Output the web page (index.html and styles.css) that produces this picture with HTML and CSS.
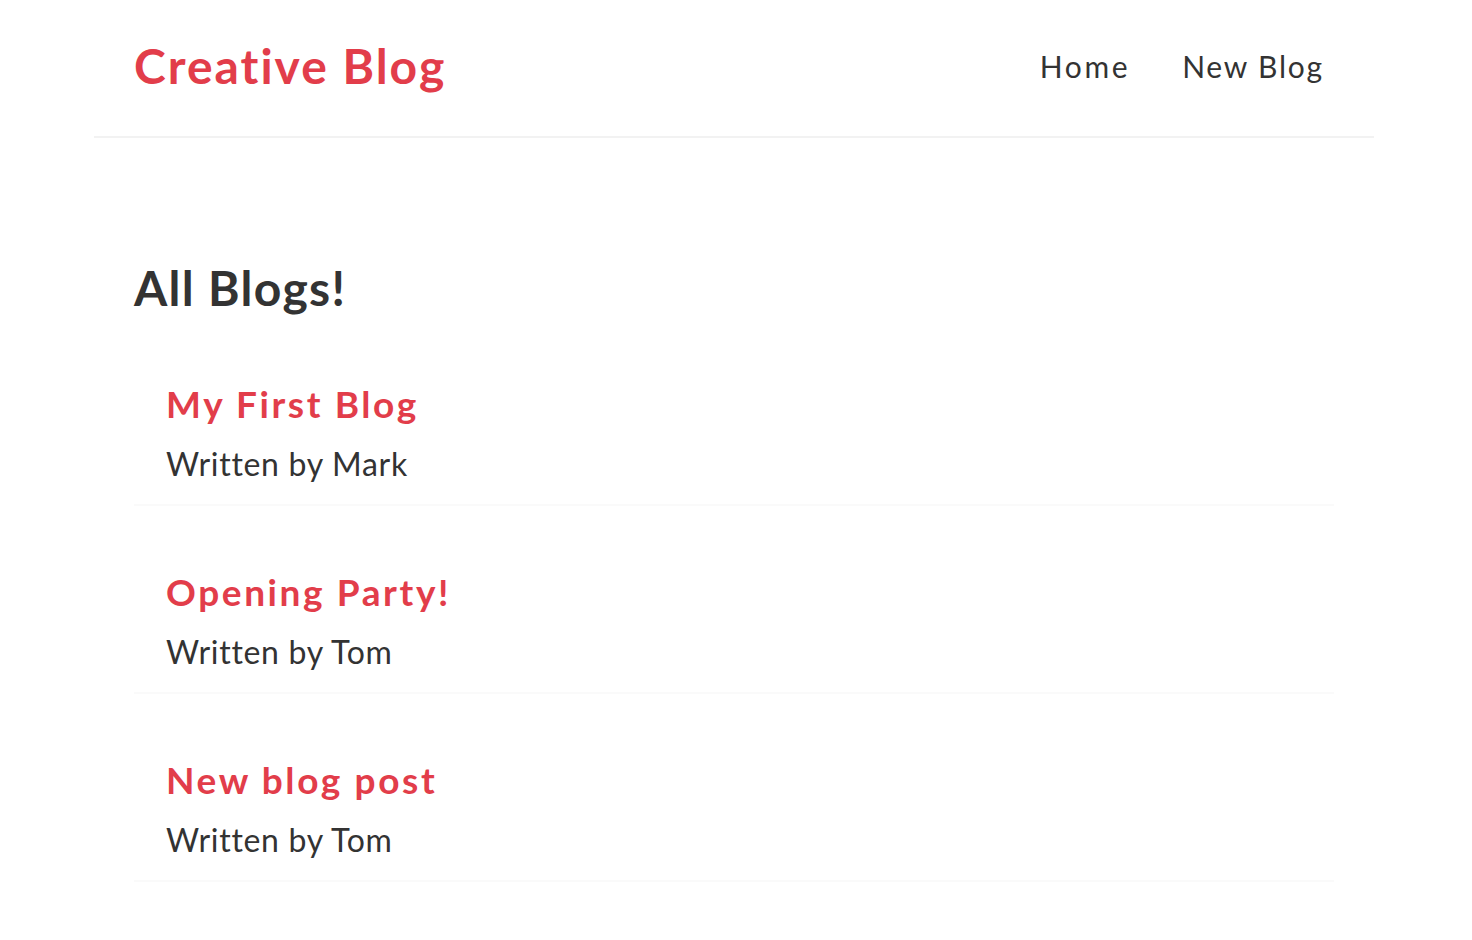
FILE: index.html
```html
<!DOCTYPE html>
<html lang="en">
<head>
<meta charset="utf-8">
<title>Creative Blog</title>
<link rel="stylesheet" href="styles.css">
</head>
<body>
<div class="app">
  <nav class="navbar">
    <h1 class="brand">Creative Blog</h1>
    <div class="links">
      <a href="#">Home</a>
      <a href="#">New Blog</a>
    </div>
  </nav>
  <main class="content">
    <h2 class="page-title">All Blogs!</h2>
    <div class="blog-list">
      <div class="blog-preview">
        <h2 class="blog-title">My First Blog</h2>
        <p class="blog-author">Written by Mark</p>
      </div>
      <div class="blog-preview">
        <h2 class="blog-title">Opening Party!</h2>
        <p class="blog-author">Written by Tom</p>
      </div>
      <div class="blog-preview">
        <h2 class="blog-title">New blog post</h2>
        <p class="blog-author">Written by Tom</p>
      </div>
    </div>
  </main>
</div>
</body>
</html>
```
FILE: styles.css
```css
* { box-sizing: border-box; }
html, body { margin: 0; padding: 0; background: #fff; }
body {
  font-family: Lato, "Open Sans", sans-serif;
  color: #333;
}
.app {
  padding-right: 4px;
}
.navbar {
  width: 1280px;
  margin: 0 auto;
  height: 138px;
  padding: 0 40px 4px;
  display: flex;
  align-items: center;
  border-bottom: 2px solid #f2f2f2;
}
.brand {
  margin: 0;
  font-size: 48px;
  line-height: 56px;
  font-weight: 700;
  letter-spacing: 2px;
  color: #e23d4a;
}
.links {
  margin-left: auto;
  display: flex;
}
.links a {
  margin-left: 30px;
  padding: 12px 10px 12px 12px;
  font-size: 30px;
  line-height: 34px;
  letter-spacing: 2.6px;
  color: #333;
  text-decoration: none;
}
.links a:last-child {
  letter-spacing: 1.8px;
}
.content {
  width: 1280px;
  margin: 0 auto;
  padding: 122px 40px 40px;
  display: flex;
  flex-direction: column;
}
.page-title {
  margin: 0 0 46px;
  font-size: 48px;
  line-height: 56px;
  font-weight: 700;
  letter-spacing: 1.3px;
}
.blog-list {
  display: flex;
  flex-direction: column;
  gap: 44px;
}
.blog-preview {
  padding: 20px 32px;
  border-bottom: 2px solid #fafafa;
}
.blog-title {
  margin: 0 0 18px;
  font-size: 37px;
  line-height: 44px;
  font-weight: 700;
  letter-spacing: 2.6px;
  color: #e23d4a;
}
.blog-author {
  margin: 0;
  font-size: 32px;
  line-height: 40px;
  letter-spacing: 0.7px;
}
```
